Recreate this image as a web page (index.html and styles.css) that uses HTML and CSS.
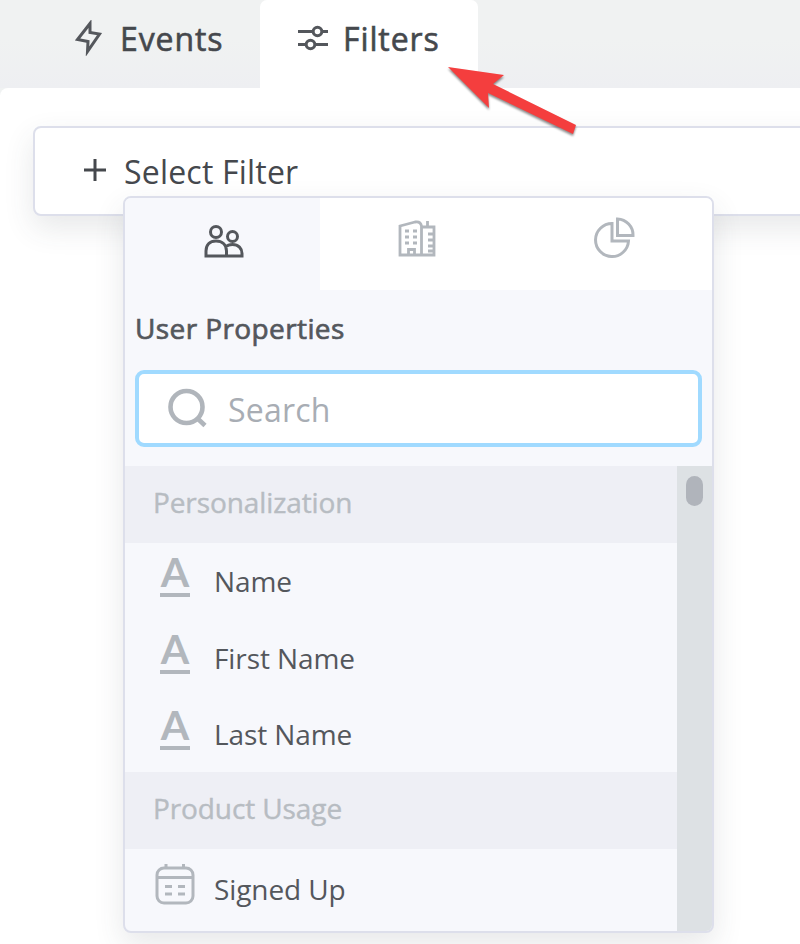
FILE: index.html
```
<!DOCTYPE html>
<html lang="en">
<head>
  <meta charset="UTF-8">
  <meta name="viewport" content="width=device-width, initial-scale=1.0">
  <title>Filters</title>
  <link rel="stylesheet" href="styles.css">
</head>
<body>
  <nav class="tabs">
    <a class="tab tab-events">
      <svg class="tab-icon" width="28" height="36" viewBox="0 0 28 36"><path d="M15 3.500 2.500 19.500 13 21.500 12.500 31.500 24.500 14 15 12.500Z"/></svg>
      <span>Events</span>
    </a>
    <a class="tab tab-filters active">
      <svg class="tab-icon" width="32" height="28" viewBox="0 0 32 28"><path d="M1 7.500H16M24 7.500H31M1 20.500H9M17 20.500H31"/><circle cx="20.500" cy="7.500" r="4.300"/><circle cx="13.500" cy="20.500" r="4.300"/></svg>
      <span>Filters</span>
    </a>
  </nav>
  <svg class="arrow" width="140" height="80" viewBox="0 0 140 80"><path d="M8 7 64 15 53 24 136 65 133 74 48 33 49 48Z"/></svg>

  <main class="panel">
    <div class="filter-box">
      <svg class="plus" width="24" height="24" viewBox="0 0 24 24"><path d="M12 1V23M1 12H23"/></svg>
      <span class="select-label">Select Filter</span>

      <div class="dropdown">
        <div class="types">
          <div class="type active">
            <svg width="42" height="40" viewBox="0 0 42 40"><circle cx="14" cy="9" r="5.500"/><circle cx="30.500" cy="13.500" r="5"/><path d="M4 33V28C4 21.500 8 18 14 18S24.500 21.500 24.500 28V33ZM23.500 24C25.500 22 27.500 21.500 30.500 21.500 36.500 21.500 40 25.500 40 30.500V33H24"/></svg>
          </div>
          <div class="type">
            <svg class="building" width="40" height="40" viewBox="0 0 40 40"><path d="M3 36V7L18 3Q23.500 2 24.500 7V36ZM24.500 8H37V36H24.500M30.500 8V2M37 15H31M37 21H31M37 27H31M37 32H31M11.500 36V30.500H17.500V36"/><path d="M8 12H12M16 12H20M8 18H12M16 18H20M8 24H12M16 24H20"/></svg>
          </div>
          <div class="type">
            <svg width="42" height="42" viewBox="0 0 42 42"><path d="M19 7.500A16.500 16.500 0 1 0 35.500 25H19ZM24.500 3V19.500H40A16 16 0 0 0 24.500 3Z"/></svg>
          </div>
        </div>

        <h3 class="title">User Properties</h3>
        <div class="search">
          <svg width="44" height="44" viewBox="0 0 44 44"><circle cx="20.500" cy="20" r="16"/><path d="M31 31 39 38.500"/></svg>
          <span class="placeholder">Search</span>
        </div>

        <div class="list-wrap">
          <div class="list">
            <div class="group">Personalization</div>
            <div class="item"><span class="letter">A</span><span>Name</span></div>
            <div class="item"><span class="letter">A</span><span>First Name</span></div>
            <div class="item"><span class="letter">A</span><span>Last Name</span></div>
            <div class="group">Product Usage</div>
            <div class="item signed-up">
              <svg class="calendar" width="40" height="42" viewBox="0 0 40 42"><rect x="2" y="5" width="36" height="35" rx="7"/><path d="M2 14.500H38M11 1V5M28.500 1V5M10 23.500H17M23 23.500H30M10 31H17M23 31H30"/></svg>
              <span>Signed Up</span>
            </div>
          </div>
          <div class="scrollbar"><div class="thumb"></div></div>
        </div>
      </div>
    </div>
  </main>
</body>
</html>
```
FILE: styles.css
```
* {
  box-sizing: border-box;
}

body {
  margin: 0;
  height: 944px;
  overflow: hidden;
  background: #f0f2f2;
  font-family: "Open Sans", "Noto Sans", sans-serif;
  color: #45484d;
}

svg {
  display: block;
  flex: none;
  fill: none;
  stroke: currentColor;
  stroke-width: 3;
}

.tabs {
  display: flex;
  height: 88px;
  background: linear-gradient(to bottom, #f0f2f2 45%, #eeeff2);
}

.tab {
  display: flex;
  align-items: center;
  height: 88px;
  padding-bottom: 11px;
  font-size: 32px;
  letter-spacing: 0.9px;
  white-space: nowrap;
  -webkit-text-stroke: 0.6px currentColor;
}

.tab-icon {
  margin-top: -2px;
  color: #54575c;
}

.tab-events {
  width: 260px;
  padding-left: 75px;
  gap: 17px;
}

.tab-filters {
  width: 218px;
  padding-left: 37px;
  gap: 14px;
}

.tab.active {
  background: #fff;
  border-radius: 7px 7px 0 0;
}

.arrow {
  position: absolute;
  left: 440px;
  top: 60px;
  z-index: 5;
  fill: #f43e3e;
  stroke: none;
  filter: drop-shadow(0 2px 1px rgba(0, 0, 0, 0.45));
}

.panel {
  height: 856px;
  padding: 38px 0 0 33px;
  background: #fff;
  border-radius: 8px 0 0 0;
}

.filter-box {
  position: relative;
  display: flex;
  align-items: center;
  height: 90px;
  width: 800px;
  padding: 0 0 0 48px;
  border: 2px solid #dddfeb;
  border-radius: 8px;
  background: #fff;
  box-shadow: 0 12px 30px rgba(60, 65, 75, 0.12);
  font-size: 32px;
  letter-spacing: 0.2px;
}

.plus {
  margin: -2px 17px 0 0;
}

.dropdown {
  position: absolute;
  left: 88px;
  top: 68px;
  width: 591px;
  height: 737px;
  overflow: hidden;
  border: 2px solid #dddfeb;
  border-radius: 8px;
  background: #f7f8fc;
  box-shadow: 0 12px 30px rgba(60, 65, 75, 0.12);
  font-size: 28px;
  letter-spacing: -0.1px;
}

.types {
  display: flex;
  height: 92px;
}

.type {
  flex: 1 1 0;
  display: flex;
  justify-content: center;
  padding-top: 18px;
  background: #fff;
  color: #b2b7bd;
}

.type.active {
  flex: none;
  width: 195px;
  padding-top: 25px;
  background: #f7f8fc;
  color: #54575c;
}

.building {
  margin: 3px 2px 0 0;
  stroke-width: 2.8;
}

.title {
  height: 80px;
  margin: 0;
  padding-left: 10px;
  color: #54575c;
  font-size: 28px;
  font-weight: 400;
  letter-spacing: 0.4px;
  line-height: 77px;
  -webkit-text-stroke: 0.7px currentColor;
}

.search {
  display: flex;
  align-items: center;
  height: 77px;
  margin: 0 10px 19px;
  padding-left: 27px;
  border: 4px solid #a0daff;
  border-radius: 9px;
  background: #fff;
  color: #a8adb4;
  font-size: 32px;
  letter-spacing: 0.2px;
}

.search svg {
  margin-right: 18px;
  color: #b0b5bb;
  stroke-width: 4.6;
}

.placeholder {
  padding-top: 2px;
}

.list-wrap {
  display: flex;
  height: 465px;
}

.list {
  flex: 1;
}

.group {
  height: 77px;
  padding-left: 28px;
  background: #eeeff5;
  color: #b7bcc2;
  line-height: 73px;
  -webkit-text-stroke: 0.4px currentColor;
}

.item {
  display: flex;
  align-items: center;
  height: 76.4px;
  padding-left: 30px;
  color: #54575c;
}

.letter {
  flex: none;
  width: 30px;
  height: 41px;
  margin: -9px 24px 0 5px;
  border-bottom: 4px solid #b2b7bd;
  color: #b2b7bd;
  font-family: Lato, "Open Sans", sans-serif;
  font-size: 41px;
  font-weight: 700;
  line-height: 32px;
  text-align: center;
}

.signed-up {
  padding-top: 4px;
}

.calendar {
  margin: -11px 19px 0 0;
  color: #b2b7bd;
}

.scrollbar {
  width: 35px;
  padding: 10px 0 0 9px;
  background: #dde1e4;
}

.thumb {
  width: 17px;
  height: 30px;
  border-radius: 9px;
  background: #b0b4bb;
}
```
